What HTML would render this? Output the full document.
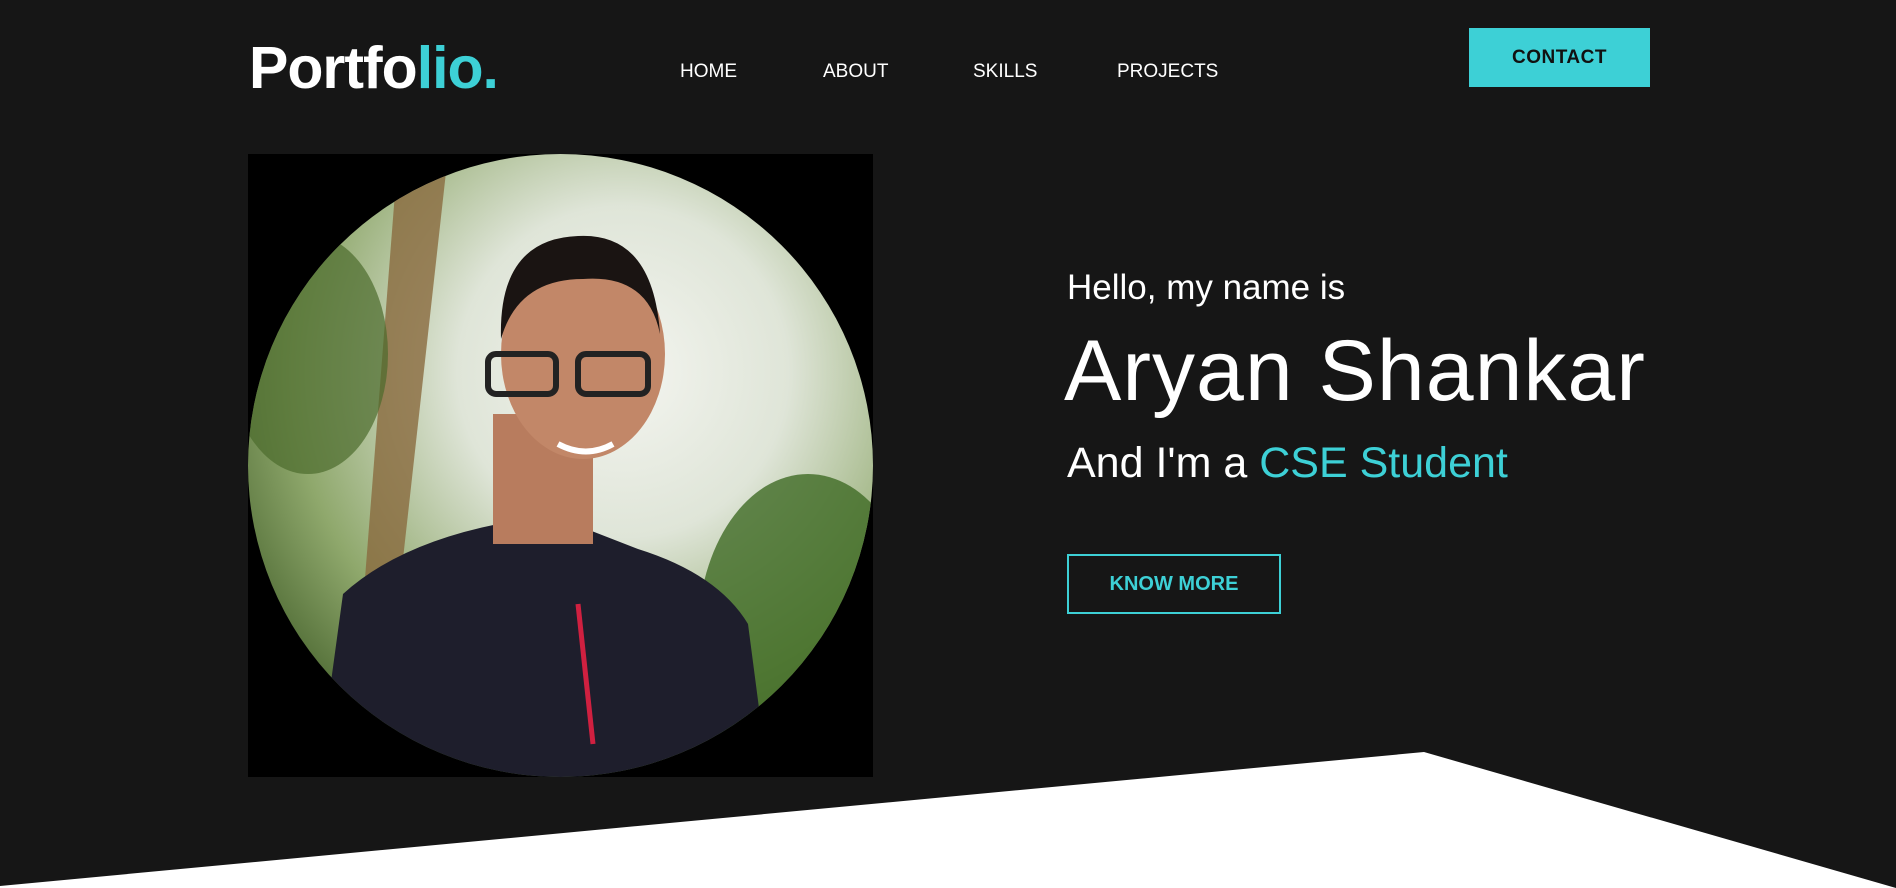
<!DOCTYPE html>
<html><head><meta charset="utf-8"><style>
html,body{margin:0;padding:0;width:1896px;height:888px;overflow:hidden;background:#161616;font-family:"Liberation Sans",sans-serif;color:#fff}
.abs{position:absolute}
.logo{left:249px;top:34px;font-size:59px;font-weight:bold;letter-spacing:-1px}
.logo span{color:#3dd0d6}
.nav{top:61px;font-size:19px}
.contact{left:1469px;top:28px;width:181px;height:59px;background:#3dd0d6;color:#111;font-weight:bold;font-size:19px;display:flex;align-items:center;justify-content:center;letter-spacing:.5px}
.photo{left:248px;top:154px;width:625px;height:623px;background:#000;overflow:hidden}
.circle{position:absolute;left:0;top:0;width:625px;height:623px;border-radius:50%;overflow:hidden;background:radial-gradient(circle at 60% 35%,#f4f5f0 0%,#dfe5d8 30%,#8fa86c 60%,#3d5a25 85%)}
.t1{left:1067px;top:268px;font-size:35px}
.t2{left:1064px;top:322px;font-size:86px;letter-spacing:1px}
.t3{left:1067px;top:439px;font-size:43px}
.t3 span{color:#3dd0d6}
.km{left:1067px;top:554px;width:210px;height:56px;border:2px solid #3dd0d6;color:#3dd0d6;font-weight:bold;font-size:20px;display:flex;align-items:center;justify-content:center}
</style></head><body>
<div class="abs logo">Portfo<span>lio.</span></div>
<div class="abs nav" style="left:680px">HOME</div>
<div class="abs nav" style="left:823px">ABOUT</div>
<div class="abs nav" style="left:973px">SKILLS</div>
<div class="abs nav" style="left:1117px">PROJECTS</div>
<div class="abs contact">CONTACT</div>
<div class="abs photo"><div class="circle">
<svg width="625" height="623" viewBox="0 0 625 623">
<path d="M150 0 L200 0 L150 450 L115 450 Z" fill="#8a6a3e" opacity=".8"/>
<ellipse cx="60" cy="200" rx="80" ry="120" fill="#4c6b2c" opacity=".7"/>
<ellipse cx="560" cy="480" rx="110" ry="160" fill="#3f6a24" opacity=".8"/>
<path d="M70 623 L95 440 Q150 390 250 370 L300 360 L390 395 Q470 420 500 470 L520 623 Z" fill="#1e1e2c"/>
<path d="M330 450 L345 590" stroke="#d02040" stroke-width="5"/>
<rect x="245" y="260" width="100" height="130" fill="#b87c5e"/>
<ellipse cx="335" cy="200" rx="82" ry="105" fill="#c28768"/>
<path d="M253 185 Q250 85 330 82 Q405 78 412 180 Q400 120 335 125 Q270 125 253 185Z" fill="#1a1412"/>
<rect x="240" y="200" width="68" height="40" rx="8" fill="none" stroke="#222" stroke-width="6"/>
<rect x="330" y="200" width="70" height="40" rx="8" fill="none" stroke="#222" stroke-width="6"/>
<path d="M310 290 Q338 305 365 290" stroke="#fff" stroke-width="6" fill="none"/>
</svg></div></div>
<div class="abs t1">Hello, my name is</div>
<div class="abs t2">Aryan Shankar</div>
<div class="abs t3">And I'm a <span>CSE Student</span></div>
<div class="abs km">KNOW MORE</div>
<svg class="abs" style="left:0;top:0" width="1896" height="888"><polygon points="0,888 0,886 1424,752 1896,888" fill="#fff"/></svg>
</body></html>
